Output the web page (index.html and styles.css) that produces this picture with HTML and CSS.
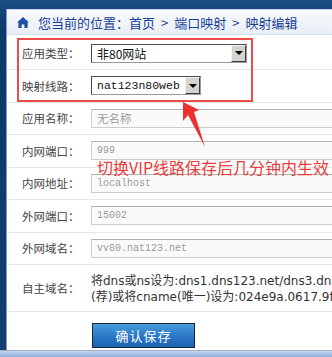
FILE: index.html
```html
<!DOCTYPE html>
<html lang="zh-CN">
<head>
  <meta charset="UTF-8" />
  <meta name="viewport" content="width=device-width, initial-scale=1.0"/>
  <title>映射编辑</title>
  <link rel="stylesheet" href="styles.css">
</head>
<body>

  <div class="frame">

    <div class="panel">

      <!-- Breadcrumb -->
      <div class="crumbs">
        <svg class="home" width="12" height="11" viewBox="0 0 12 11">
          <path d="M6 0 L12 5.6 L10.6 5.6 L10.6 11 L7.4 11 L7.4 7.4 L4.6 7.4 L4.6 11 L1.4 11 L1.4 5.6 L0 5.6 Z" fill="#1f4fa6"/>
        </svg>
        <span>您当前的位置：首页<span class="sep">&gt;</span>端口映射<span class="sep">&gt;</span>映射编辑</span>
      </div>

      <!-- Form -->
      <div class="form">
        <div class="row">
          <label class="label">应用类型：</label>
          <div class="select wide">
            <span class="select-text">非80网站</span>
            <span class="select-btn"><i></i></span>
          </div>
        </div>
        <div class="row">
          <label class="label">映射线路：</label>
          <div class="select narrow">
            <span class="select-text mono">nat123n80web</span>
            <span class="select-btn"><i></i></span>
          </div>
        </div>
        <div class="row">
          <label class="label">应用名称：</label>
          <input class="input cjk" type="text" placeholder="无名称" readonly />
        </div>
        <div class="row">
          <label class="label">内网端口：</label>
          <input class="input" type="text" value="999" readonly />
        </div>
        <div class="row">
          <label class="label">内网地址：</label>
          <input class="input" type="text" value="localhost" readonly />
        </div>
        <div class="row">
          <label class="label">外网端口：</label>
          <input class="input" type="text" value="15002" readonly />
        </div>
        <div class="row">
          <label class="label">外网域名：</label>
          <input class="input" type="text" value="vv80.nat123.net" readonly />
        </div>
        <div class="row tall">
          <label class="label">自主域名：</label>
          <div class="note">
            <div>将dns或ns设为:dns1.dns123.net/dns3.dns123.net(推</div>
            <div>(荐)或将cname(唯一)设为:024e9a.0617.9f.nat123.net</div>
          </div>
        </div>
        <div class="actions">
          <button class="btn">确认保存</button>
        </div>
      </div>

    </div>

    <div class="bottombar"></div>

    <!-- Annotation -->
    <div class="mark-box"></div>
    <svg class="mark-arrow" width="40" height="52" viewBox="0 0 40 52">
      <polygon points="13,2 13,21 18,15 35,47 24,12 29,10" fill="#ee2f2f"/>
    </svg>
    <div class="mark-text">切换VIP线路保存后几分钟内生效</div>

  </div>

</body>
</html>
```

FILE: styles.css
```css
* {
  box-sizing: border-box;
}

body {
  margin: 0;
  font-family: "Noto Sans CJK SC", sans-serif;
}

.frame {
  position: relative;
  width: 332px;
  height: 357px;
  overflow: hidden;
  padding: 9px 0 0 6px;
  display: flex;
  flex-direction: column;
  background: linear-gradient(#1c4e86, #0d3868 30px, #123f72);
}

.panel {
  flex: 1;
  background: #fff;
  border-left: 1px solid #7c9cc4;
  display: flex;
  flex-direction: column;
}

.crumbs {
  height: 26px;
  display: flex;
  align-items: center;
  gap: 9px;
  padding-left: 10px;
  background: linear-gradient(#f8fafd, #e9eff7);
  border-top: 1px solid #c9d6e6;
  border-bottom: 1px solid #d6dee9;
  color: #1a3f96;
  font-size: 13px;
  white-space: nowrap;
}

.sep {
  margin: 0 6px;
}

.home {
  flex-shrink: 0;
  margin-top: 1px;
}

.form {
  padding-top: 2.5px;
}

.row {
  height: 32.5px;
  display: flex;
  align-items: center;
  padding-left: 15px;
  border-bottom: 1px solid #e6e6e6;
  white-space: nowrap;
}

.row.tall {
  height: 47px;
}

.label {
  width: 69px;
  flex-shrink: 0;
  color: #444;
  font-size: 11.5px;
}

.select {
  height: 19px;
  display: flex;
  align-items: center;
  background: #fff;
  border: 1px solid #4a4a4a;
  border-right-color: #9a9a9a;
  border-bottom-color: #9a9a9a;
  font-size: 12px;
  color: #111;
}

.select.wide {
  width: 156px;
}

.select.narrow {
  width: 110px;
}

.select-text {
  flex: 1;
  padding-left: 5px;
}

.mono {
  font-family: "Liberation Mono", monospace;
  font-size: 11.5px;
}

.select-btn {
  width: 15px;
  height: 17px;
  display: flex;
  align-items: center;
  justify-content: center;
  background: #d6d3cc;
  border: 1px solid;
  border-color: #f4f4f4 #404040 #404040 #f4f4f4;
}

.select-btn i {
  width: 0;
  height: 0;
  border-left: 4px solid transparent;
  border-right: 4px solid transparent;
  border-top: 4px solid #000;
}

.input {
  width: 260px;
  height: 19px;
  flex-shrink: 0;
  padding: 0 0 0 5px;
  border: 1px solid #cdcdcd;
  border-top-color: #b0b0b0;
  background: #fafafa;
  color: #9a9a9a;
  font-family: "Liberation Mono", monospace;
  font-size: 10px;
  outline: none;
}

.input.cjk {
  font-family: "Noto Sans CJK SC", sans-serif;
  font-size: 11.5px;
}

.input::placeholder {
  color: #9a9a9a;
}

.note {
  font-family: "DejaVu Sans", "Noto Sans CJK SC", sans-serif;
  font-size: 12px;
  line-height: 16px;
  color: #333;
  padding-top: 1px;
}

.actions {
  padding: 10px 0 0 85px;
}

.btn {
  width: 103px;
  height: 25px;
  border: 1px solid #16263c;
  background: linear-gradient(#4a9ce0, #2a76c6 55%, #1d63b0);
  color: #fff;
  font-family: "Noto Sans CJK SC", sans-serif;
  font-size: 13px;
  letter-spacing: 1px;
  cursor: pointer;
}

.bottombar {
  height: 7px;
  margin-left: -6px;
  border-top: 1px solid #a3afbf;
  background: linear-gradient(#c3d6f1, #8cb0e0);
}

.mark-box {
  position: absolute;
  left: 17px;
  top: 38px;
  width: 236px;
  height: 64px;
  border: 2px solid #ef4a4a;
}

.mark-arrow {
  position: absolute;
  left: 170px;
  top: 100px;
}

.mark-text {
  position: absolute;
  left: 97px;
  top: 156px;
  color: #ea3b3b;
  font-size: 16px;
  line-height: 22px;
  white-space: nowrap;
}
```
